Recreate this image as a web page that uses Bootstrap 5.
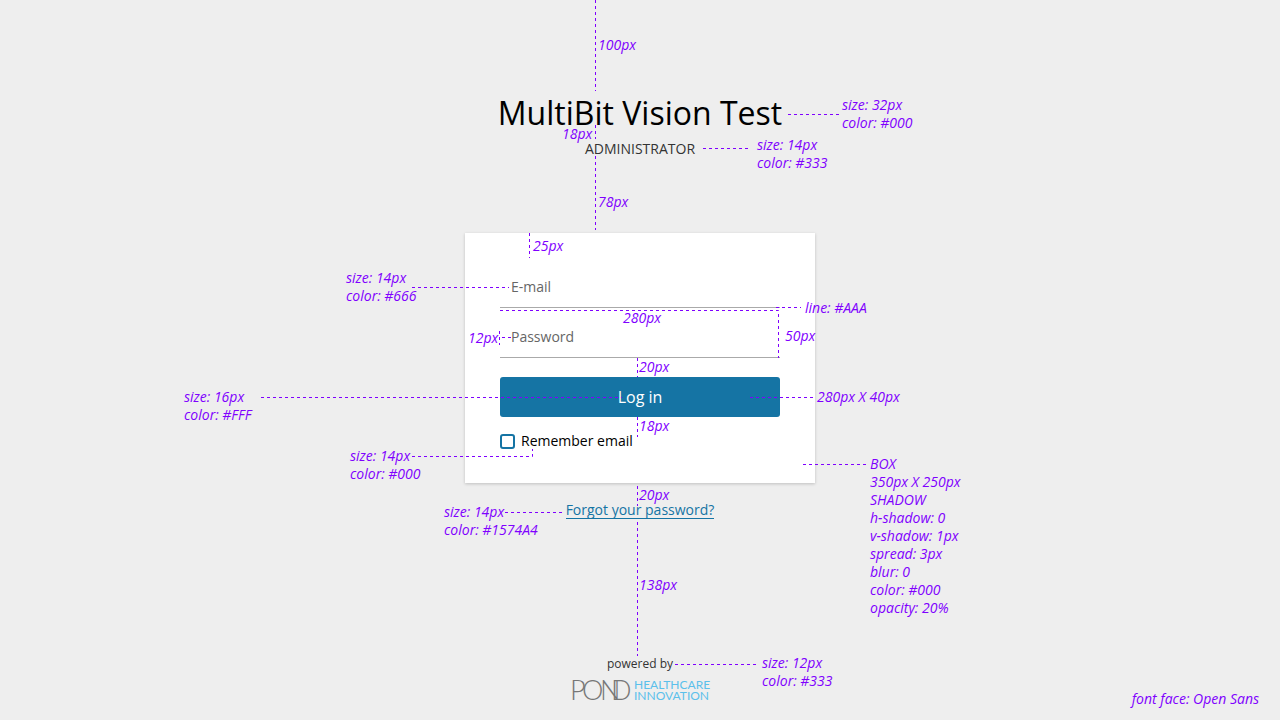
<!DOCTYPE html>
<html lang="en">
<head>
<meta charset="utf-8">
<meta name="viewport" content="width=device-width, initial-scale=1">
<title>MultiBit Vision Test</title>
<link href="https://cdn.jsdelivr.net/npm/bootstrap@5.3.0/dist/css/bootstrap.min.css" rel="stylesheet">
<style>
  body { background: #eee; color: #000; font: 14px/20px "Open Sans", sans-serif; min-height: 100vh; overflow-x: hidden; }
  .app-title { font-size: 32px; line-height: 40px; font-weight: 400; margin: 93px 0 6px; }
  .role { color: #333; }
  .login-box { width: 350px; max-width: 100%; min-height: 250px; margin-top: 74px; padding: 25px 35px; background: #fff; box-shadow: 0 1px 3px rgba(0,0,0,.2); }
  .line-input { height: 50px; padding: 8px 11px 0; border: 0; border-bottom: 1px solid #aaa; border-radius: 0; font-size: 14px; background: transparent; }
  .line-input::placeholder { color: #666; }
  .btn-login { height: 40px; margin-top: 19px; padding: 0; border: 0; border-radius: 3px; background: #1574a4; color: #fff; font-size: 16px; font-weight: 500; }
  .btn-login:hover { background: #105f87; color: #fff; }
  .remember { gap: 6px; margin-top: 14px; }
  .remember .form-check-input { width: 15px; height: 15px; margin: 0; border: 2px solid #1574a4; border-radius: 3px; }
  .forgot { margin-top: 19px; color: #1574a4; text-decoration: none; line-height: 16px; border-bottom: 1px solid #1574a4; }
  .powered { margin-top: 135px; color: #333; font-size: 12px; }
  .brand-mark { margin-top: 4px; overflow: visible; }

  /* Specification notes, measured from the page's centre line */
  .notes { top: 0; left: 50%; width: 0; height: 0; pointer-events: none; color: #7f00ff; font-style: italic; line-height: 18px; white-space: nowrap; }
  .notes svg { position: absolute; left: 0; top: 0; overflow: visible; }
  .notes path { fill: none; stroke: #7f00ff; stroke-dasharray: 3 3; }
  .notes span { position: absolute; }
  .n-top { left: -42px; top: 36px; }
  .n-title { left: 202px; top: 96px; }
  .n-gap { left: -78px; top: 125px; }
  .n-role { left: 117px; top: 136px; }
  .n-space { left: -42px; top: 193px; }
  .n-pad { left: -107px; top: 237px; }
  .n-input { left: -294px; top: 269px; }
  .n-rule { left: 165px; top: 299px; }
  .n-width { left: -17px; top: 309px; }
  .n-height { left: 145px; top: 327px; }
  .n-indent { left: -172px; top: 329px; }
  .n-above { left: -1px; top: 358px; }
  .n-button { left: 177px; top: 388px; }
  .n-btntext { left: -456px; top: 388px; }
  .n-below { left: -1px; top: 417px; }
  .n-check { left: -290px; top: 447px; }
  .n-box { left: 230px; top: 455px; }
  .n-link { left: -196px; top: 503px; }
  .n-under { left: -1px; top: 486px; }
  .n-foot { left: -1px; top: 576px; }
  .n-powered { left: 122px; top: 654px; }
  .font-note { right: 21px; top: 690px; line-height: 18px; color: #7f00ff; font-style: italic; }
</style>
</head>
<body class="position-relative">
<main class="d-flex flex-column align-items-center">
  <h1 class="app-title text-center">MultiBit Vision Test</h1>
  <div class="role">ADMINISTRATOR</div>
  <form class="login-box">
    <input type="email" class="form-control line-input shadow-none" placeholder="E-mail" aria-label="E-mail">
    <input type="password" class="form-control line-input shadow-none" placeholder="Password" aria-label="Password">
    <button type="submit" class="btn btn-login w-100">Log in</button>
    <div class="remember d-flex align-items-center">
      <input type="checkbox" class="form-check-input" id="remember">
      <label for="remember">Remember email</label>
    </div>
  </form>
  <a href="#" class="forgot">Forgot your password?</a>
  <footer class="d-flex flex-column align-items-center">
    <div class="powered">powered by</div>
    <svg class="brand-mark" width="136" height="24" viewBox="0 0 136 24" role="img" aria-label="Pond Healthcare Innovation">
      <text x="-2 10 28 39" y="22" font-family="Lato, sans-serif" font-weight="300" font-size="27" fill="#777">POND</text>
      <g font-family="Lato, sans-serif" font-size="12" fill="#5bc0eb">
        <text x="62" y="11">HEALTHCARE</text><text x="62" y="22">INNOVATION</text>
      </g>
    </svg>
  </footer>
</main>

<div class="notes position-absolute">
  <svg width="1" height="1" aria-hidden="true">
    <path d="M-44.500 0V91M-44.500 125V139M-44.500 156V230M-110.500 233V258M148 114.500H199M63 148.500H111"/>
    <path d="M-228 287.500H-131M136 307.500H161M-140 310.500H138.500V358M-140.500 331V345M-138 337.500H-129"/>
    <path d="M-2.500 358V377M-379 397.500H-18M110 397.500H173M-2.500 417V437M-228 456.500H-107.500V449M163 464.500H226"/>
    <path d="M-2.500 486V506M-135 512.500H-78M-2.500 522V656M35 664.500H116"/>
  </svg>
  <span class="n-top">100px</span>
  <span class="n-title">size: 32px<br>color: #000</span>
  <span class="n-gap">18px</span>
  <span class="n-role">size: 14px<br>color: #333</span>
  <span class="n-space">78px</span>
  <span class="n-pad">25px</span>
  <span class="n-input">size: 14px<br>color: #666</span>
  <span class="n-rule">line: #AAA</span>
  <span class="n-width">280px</span>
  <span class="n-height">50px</span>
  <span class="n-indent">12px</span>
  <span class="n-above">20px</span>
  <span class="n-button">280px X 40px</span>
  <span class="n-btntext">size: 16px<br>color: #FFF</span>
  <span class="n-below">18px</span>
  <span class="n-check">size: 14px<br>color: #000</span>
  <span class="n-box">BOX<br>350px X 250px<br>SHADOW<br>h-shadow: 0<br>v-shadow: 1px<br>spread: 3px<br>blur: 0<br>color: #000<br>opacity: 20%</span>
  <span class="n-link">size: 14px<br>color: #1574A4</span>
  <span class="n-under">20px</span>
  <span class="n-foot">138px</span>
  <span class="n-powered">size: 12px<br>color: #333</span>
</div>
<div class="font-note position-absolute">font face: Open Sans</div>
<script src="https://cdn.jsdelivr.net/npm/bootstrap@5.3.0/dist/js/bootstrap.bundle.min.js"></script>
</body>
</html>
